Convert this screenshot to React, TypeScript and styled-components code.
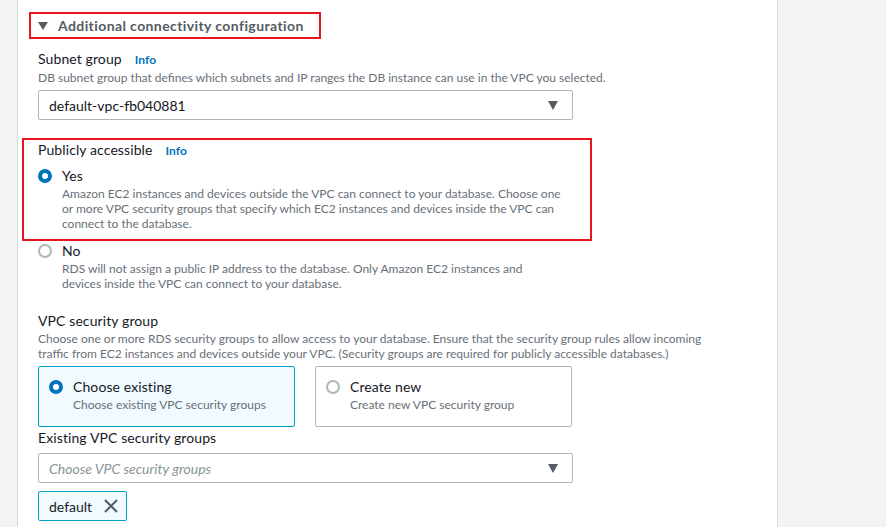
import styled, { createGlobalStyle } from "styled-components";

const GlobalStyle = createGlobalStyle`
  body {
    margin: 0;
    background: #ffffff;
    font-family: Lato, "Liberation Sans", sans-serif;
    color: #16191f;
  }
`;

const Page = styled.div`
  display: flex;
  height: 527px;
  overflow: hidden;
`;

const Rail = styled.div<{ $side: "left" | "right" }>`
  background: #f2f3f3;
  ${(p) =>
    p.$side === "left"
      ? "width: 17px; border-right: 1px solid #d5dbdb;"
      : "flex: 1; border-left: 1px solid #d5dbdb;"}
`;

const Panel = styled.div`
  width: 739px;
  padding: 12px 0 0 20px;
  display: flex;
  flex-direction: column;
`;

const Highlight = styled.div`
  border: 2px solid #e8141f;
`;

const Header = styled(Highlight)`
  align-self: flex-start;
  margin-left: -9px;
  height: 23px;
  padding: 0 15px 0 7px;
  display: flex;
  align-items: center;
  gap: 10px;
  font-size: 14px;
  font-weight: 700;
  letter-spacing: 0.4px;
  color: #545b64;
`;

const Caret = styled.span`
  width: 0;
  height: 0;
  border-left: 5px solid transparent;
  border-right: 5px solid transparent;
  border-top: 8px solid #545b64;
`;

const Label = styled.div<{ $top?: number }>`
  margin-top: ${(p) => p.$top ?? 0}px;
  font-size: 14px;
  line-height: 20px;
  letter-spacing: 0.1px;
  display: flex;
  align-items: baseline;
  gap: 13px;
`;

const Info = styled.span`
  font-size: 12px;
  font-weight: 700;
  color: #0073bb;
`;

const Desc = styled.div<{ $width?: number }>`
  font-size: 12px;
  line-height: 15px;
  color: #687078;
  max-width: ${(p) => p.$width ?? 700}px;
`;

const Select = styled.div<{ $top: number }>`
  margin-top: ${(p) => p.$top}px;
  width: 509px;
  height: 28px;
  border: 1px solid #aab7b8;
  border-radius: 2px;
  display: flex;
  align-items: center;
  justify-content: space-between;
  padding: 0 14px 0 10px;
`;

const SelectValue = styled.span<{ $placeholder?: boolean }>`
  font-size: 14px;
  color: ${(p) => (p.$placeholder ? "#879596" : "#16191f")};
  font-style: ${(p) => (p.$placeholder ? "italic" : "normal")};
`;

const Arrow = styled.span`
  width: 0;
  height: 0;
  border-left: 5px solid transparent;
  border-right: 5px solid transparent;
  border-top: 9px solid #545b64;
`;

const PublicBox = styled(Highlight)`
  margin: 18px 0 0 -16px;
  width: 552px;
  padding: 0 0 8px 14px;
`;

const Option = styled.div<{ $top?: number }>`
  margin-top: ${(p) => p.$top ?? 0}px;
  display: grid;
  grid-template-columns: 14px 1fr;
  column-gap: 10px;
`;

const Radio = styled.span<{ $checked?: boolean }>`
  width: 14px;
  height: 14px;
  margin-top: 3px;
  box-sizing: border-box;
  border-radius: 50%;
  background: #ffffff;
  border: ${(p) => (p.$checked ? "4px solid #0073bb" : "2px solid #aab7b8")};
`;

const OptionText = styled.div`
  display: flex;
  flex-direction: column;
`;

const OptionTitle = styled.div`
  font-size: 14px;
  line-height: 20px;
  letter-spacing: 0.1px;
`;

const Cards = styled.div`
  margin-top: 5px;
  display: flex;
  gap: 20px;
`;

const Card = styled.div<{ $active?: boolean }>`
  width: 235px;
  height: 49px;
  padding: 10px 10px 0 10px;
  border: 1px solid ${(p) => (p.$active ? "#00a1c9" : "#aab7b8")};
  background: ${(p) => (p.$active ? "#f1faff" : "#ffffff")};
  border-radius: 2px;
`;

const Token = styled.div`
  margin-top: 8px;
  align-self: flex-start;
  height: 28px;
  padding: 0 8px 0 10px;
  display: flex;
  align-items: center;
  gap: 12px;
  border: 1px solid #00a1c9;
  background: #f1faff;
  border-radius: 2px;
  font-size: 14px;
`;

const CloseIcon = () => (
  <svg width="14" height="14" viewBox="0 0 14 14">
    <path d="M1 1 L13 13 M13 1 L1 13" stroke="#545b64" strokeWidth="2" fill="none" />
  </svg>
);

const App = () => {
  return (
    <>
      <GlobalStyle />
      <Page>
        <Rail $side="left" />
        <Panel>
          <Header>
            <Caret />
            Additional connectivity configuration
          </Header>

          <Label $top={10}>
            Subnet group <Info>Info</Info>
          </Label>
          <Desc>DB subnet group that defines which subnets and IP ranges the DB instance can use in the VPC you selected.</Desc>
          <Select $top={5}>
            <SelectValue>default-vpc-fb040881</SelectValue>
            <Arrow />
          </Select>

          <PublicBox>
            <Label>
              Publicly accessible <Info>Info</Info>
            </Label>
            <Option $top={5}>
              <Radio $checked />
              <OptionText>
                <OptionTitle>Yes</OptionTitle>
                <Desc $width={508}>
                  Amazon EC2 instances and devices outside the VPC can connect to your database. Choose one or more VPC security groups that specify which EC2 instances and devices inside the VPC can connect to the database.
                </Desc>
              </OptionText>
            </Option>
          </PublicBox>
          <Option>
            <Radio />
            <OptionText>
              <OptionTitle>No</OptionTitle>
              <Desc $width={500}>
                RDS will not assign a public IP address to the database. Only Amazon EC2 instances and devices inside the VPC can connect to your database.
              </Desc>
            </OptionText>
          </Option>

          <Label $top={20}>VPC security group</Label>
          <Desc $width={688}>
            Choose one or more RDS security groups to allow access to your database. Ensure that the security group rules allow incoming traffic from EC2 instances and devices outside your VPC. (Security groups are required for publicly accessible databases.)
          </Desc>
          <Cards>
            <Card $active>
              <Option>
                <Radio $checked />
                <OptionText>
                  <OptionTitle>Choose existing</OptionTitle>
                  <Desc>Choose existing VPC security groups</Desc>
                </OptionText>
              </Option>
            </Card>
            <Card>
              <Option>
                <Radio />
                <OptionText>
                  <OptionTitle>Create new</OptionTitle>
                  <Desc>Create new VPC security group</Desc>
                </OptionText>
              </Option>
            </Card>
          </Cards>

          <Label $top={1}>Existing VPC security groups</Label>
          <Select $top={5}>
            <SelectValue $placeholder>Choose VPC security groups</SelectValue>
            <Arrow />
          </Select>
          <Token>
            default
            <CloseIcon />
          </Token>
        </Panel>
        <Rail $side="right" />
      </Page>
    </>
  );
};

export default App;
